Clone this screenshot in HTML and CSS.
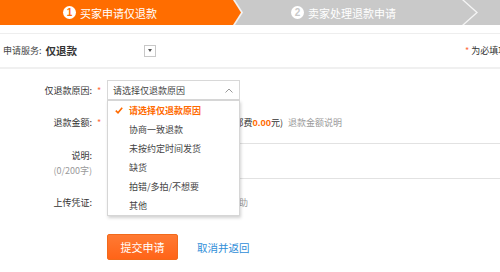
FILE: index.html
```html
<!DOCTYPE html>
<html lang="zh-CN">
<head>
    <meta charset="UTF-8">
    <meta name="viewport" content="width=device-width, initial-scale=1.0">
    <title>申请退款</title>
    <link rel="stylesheet" href="styles.css">
</head>
<body>
    <div class="steps">
        <div class="step-edge">
            <div class="step step-active"><span class="num">1</span>买家申请仅退款</div>
        </div>
        <div class="step step-next"><span class="num">2</span>卖家处理退款申请</div>
        <div class="step-more"></div>
    </div>
    <div class="steps-line"></div>

    <div class="service">
        <span class="service-label">申请服务: </span>
        <span class="service-value">仅退款</span>
        <span class="mini-select"><i></i></span>
        <span class="required-tip"><em>*</em> 为必填项</span>
    </div>

    <form class="form">
        <div class="row row-reason">
            <label class="label">仅退款原因:</label>
            <span class="star">*</span>
            <div class="select-wrap">
                <div class="select">
                    请选择仅退款原因
                    <svg class="arrow" width="8" height="5" viewBox="0 0 8 5"><polyline points="0.5,4.5 4,1 7.5,4.5" fill="none" stroke="#999" stroke-width="1"/></svg>
                </div>
                <ul class="dropdown">
                    <li class="selected">
                        <svg class="check" width="8" height="7" viewBox="0 0 8 7"><polyline points="0.8,3.6 3,5.8 7.2,0.8" fill="none" stroke="#ff6a00" stroke-width="1.6"/></svg>
                        请选择仅退款原因
                    </li>
                    <li>协商一致退款</li>
                    <li>未按约定时间发货</li>
                    <li>缺货</li>
                    <li>拍错/多拍/不想要</li>
                    <li>其他</li>
                </ul>
            </div>
        </div>

        <div class="row row-amount">
            <label class="label">退款金额:</label>
            <span class="star">*</span>
            <div class="field amount">
                <span class="amount-input">28.00</span>
                <span>元 (最多¥28.00，含邮费<b>0.00</b>元)</span>
                <span class="muted">退款金额说明</span>
            </div>
        </div>

        <div class="row row-desc">
            <div class="label label-stack">
                <span>说明:</span>
                <span class="muted">(0/200字)</span>
            </div>
            <span class="star"></span>
            <div class="textarea"></div>
        </div>

        <div class="row row-upload">
            <label class="label">上传凭证:</label>
            <span class="star"></span>
            <div class="field upload muted">上传图片 最多3张 查看上传帮助</div>
        </div>

        <div class="row row-submit">
            <span class="label"></span>
            <span class="star"></span>
            <button type="button" class="btn-submit">提交申请</button>
            <a class="cancel" href="#">取消并返回</a>
        </div>
    </form>
</body>
</html>
```

FILE: styles.css
```css
body {
    margin: 0;
    background-color: #ffffff;
    font-family: "Noto Sans CJK SC", "Liberation Sans", sans-serif;
    font-size: 9px;
    color: #333333;
    overflow: hidden;
}
.steps {
    display: flex;
    height: 25px;
    background-color: #c9c9c9;
    position: relative;
}
.step-edge {
    width: 243px;
    height: 25px;
    background-color: #f2f2f2;
    clip-path: polygon(0 0, 235px 0, 243px 50%, 235px 100%, 0 100%);
    flex-shrink: 0;
}
.step {
    display: flex;
    align-items: center;
    height: 25px;
    font-size: 11px;
    color: #ffffff;
}
.step-active {
    width: 241px;
    padding-left: 63px;
    box-sizing: border-box;
    background-color: #ff6d00;
    clip-path: polygon(0 0, 233px 0, 241px 50%, 233px 100%, 0 100%);
}
.step-next {
    padding-left: 48px;
}
.num {
    display: inline-flex;
    align-items: center;
    justify-content: center;
    width: 13px;
    height: 13px;
    margin-right: 4px;
    border-radius: 50%;
    background-color: #ffffff;
    color: #ff6d00;
    font-family: "Liberation Sans", sans-serif;
    font-size: 10px;
    font-weight: bold;
}
.step-next .num {
    color: #c9c9c9;
}
.step-more {
    position: absolute;
    left: 462px;
    top: 0;
    width: 16px;
    height: 25px;
    background-color: #f4f4f4;
    clip-path: polygon(0 0, 2px 0, 16px 50%, 2px 100%, 0 100%, 14px 50%);
}
.steps-line {
    margin-top: 8px;
    border-top: 1px solid #eeeeee;
}
.service {
    display: flex;
    align-items: center;
    height: 33px;
    padding-left: 3px;
    border-bottom: 2px solid #f0f0f0;
    white-space: nowrap;
}
.service-label {
    color: #444444;
    white-space: pre;
}
.service-value {
    font-size: 10.5px;
    font-weight: bold;
    color: #333333;
    margin-left: 2px;
}
.mini-select {
    display: inline-flex;
    align-items: center;
    justify-content: center;
    width: 10px;
    height: 10px;
    margin-left: 67px;
    border: 1px solid #c8c8c8;
}
.mini-select i {
    width: 0;
    height: 0;
    border-left: 2.5px solid transparent;
    border-right: 2.5px solid transparent;
    border-top: 3px solid #555555;
}
.required-tip {
    margin-left: auto;
    margin-right: -40px;
    width: 75px;
    color: #333333;
}
.required-tip em {
    font-style: normal;
    color: #ff6d3a;
}
.form {
    padding-top: 11px;
}
.row {
    display: flex;
    align-items: center;
    white-space: nowrap;
}
.label {
    width: 92px;
    text-align: right;
    flex-shrink: 0;
    color: #333333;
}
.star {
    width: 15px;
    padding-left: 5px;
    box-sizing: border-box;
    flex-shrink: 0;
    color: #ff6d3a;
}
.row-reason {
    height: 20px;
}
.select-wrap {
    position: relative;
    width: 133px;
}
.select {
    display: flex;
    align-items: center;
    height: 18px;
    padding-left: 5px;
    border: 1px solid #d8d8d8;
    color: #444444;
}
.arrow {
    margin-left: auto;
    margin-right: 6px;
}
.dropdown {
    position: absolute;
    left: 0;
    top: 20px;
    z-index: 2;
    width: 131px;
    margin: 0;
    padding: 0;
    list-style: none;
    background-color: #ffffff;
    border: 1px solid #d6d6d6;
    box-shadow: 1px 2px 3px rgba(0, 0, 0, 0.18);
}
.dropdown li {
    position: relative;
    height: 19px;
    line-height: 19px;
    padding-left: 21px;
    color: #444444;
}
.dropdown li.selected {
    color: #ff6a00;
    font-weight: bold;
}
.check {
    position: absolute;
    left: 7px;
    top: 6px;
}
.row-amount {
    height: 20px;
    margin-top: 12px;
}
.amount {
    display: flex;
    align-items: center;
    gap: 5px;
}
.amount-input {
    width: 45px;
    color: #333333;
}
.amount b {
    font-family: "Liberation Sans", sans-serif;
    font-size: 9.5px;
    color: #ff6a00;
}
.muted {
    color: #9a9a9a;
}
.row-desc {
    height: 36px;
    margin-top: 11px;
    align-items: flex-start;
}
.label-stack {
    display: flex;
    flex-direction: column;
    align-items: flex-end;
    padding-top: 5px;
    line-height: 15px;
}
.textarea {
    flex: 1;
    height: 34px;
    border: 1px solid #e2e2e2;
    border-right: none;
}
.row-upload {
    height: 20px;
    margin-top: 13px;
}
.upload {
    padding-left: 15px;
}
.row-submit {
    height: 26px;
    margin-top: 22px;
}
.btn-submit {
    width: 71px;
    height: 26px;
    padding: 0;
    border: 1px solid #f26a1b;
    border-radius: 2px;
    background: linear-gradient(#ff7a33, #ff6418);
    color: #ffffff;
    font-family: "Noto Sans CJK SC", sans-serif;
    font-size: 11px;
    cursor: pointer;
}
.cancel {
    margin-left: 19px;
    font-size: 10.5px;
    color: #2f8ed8;
    text-decoration: none;
}
```
